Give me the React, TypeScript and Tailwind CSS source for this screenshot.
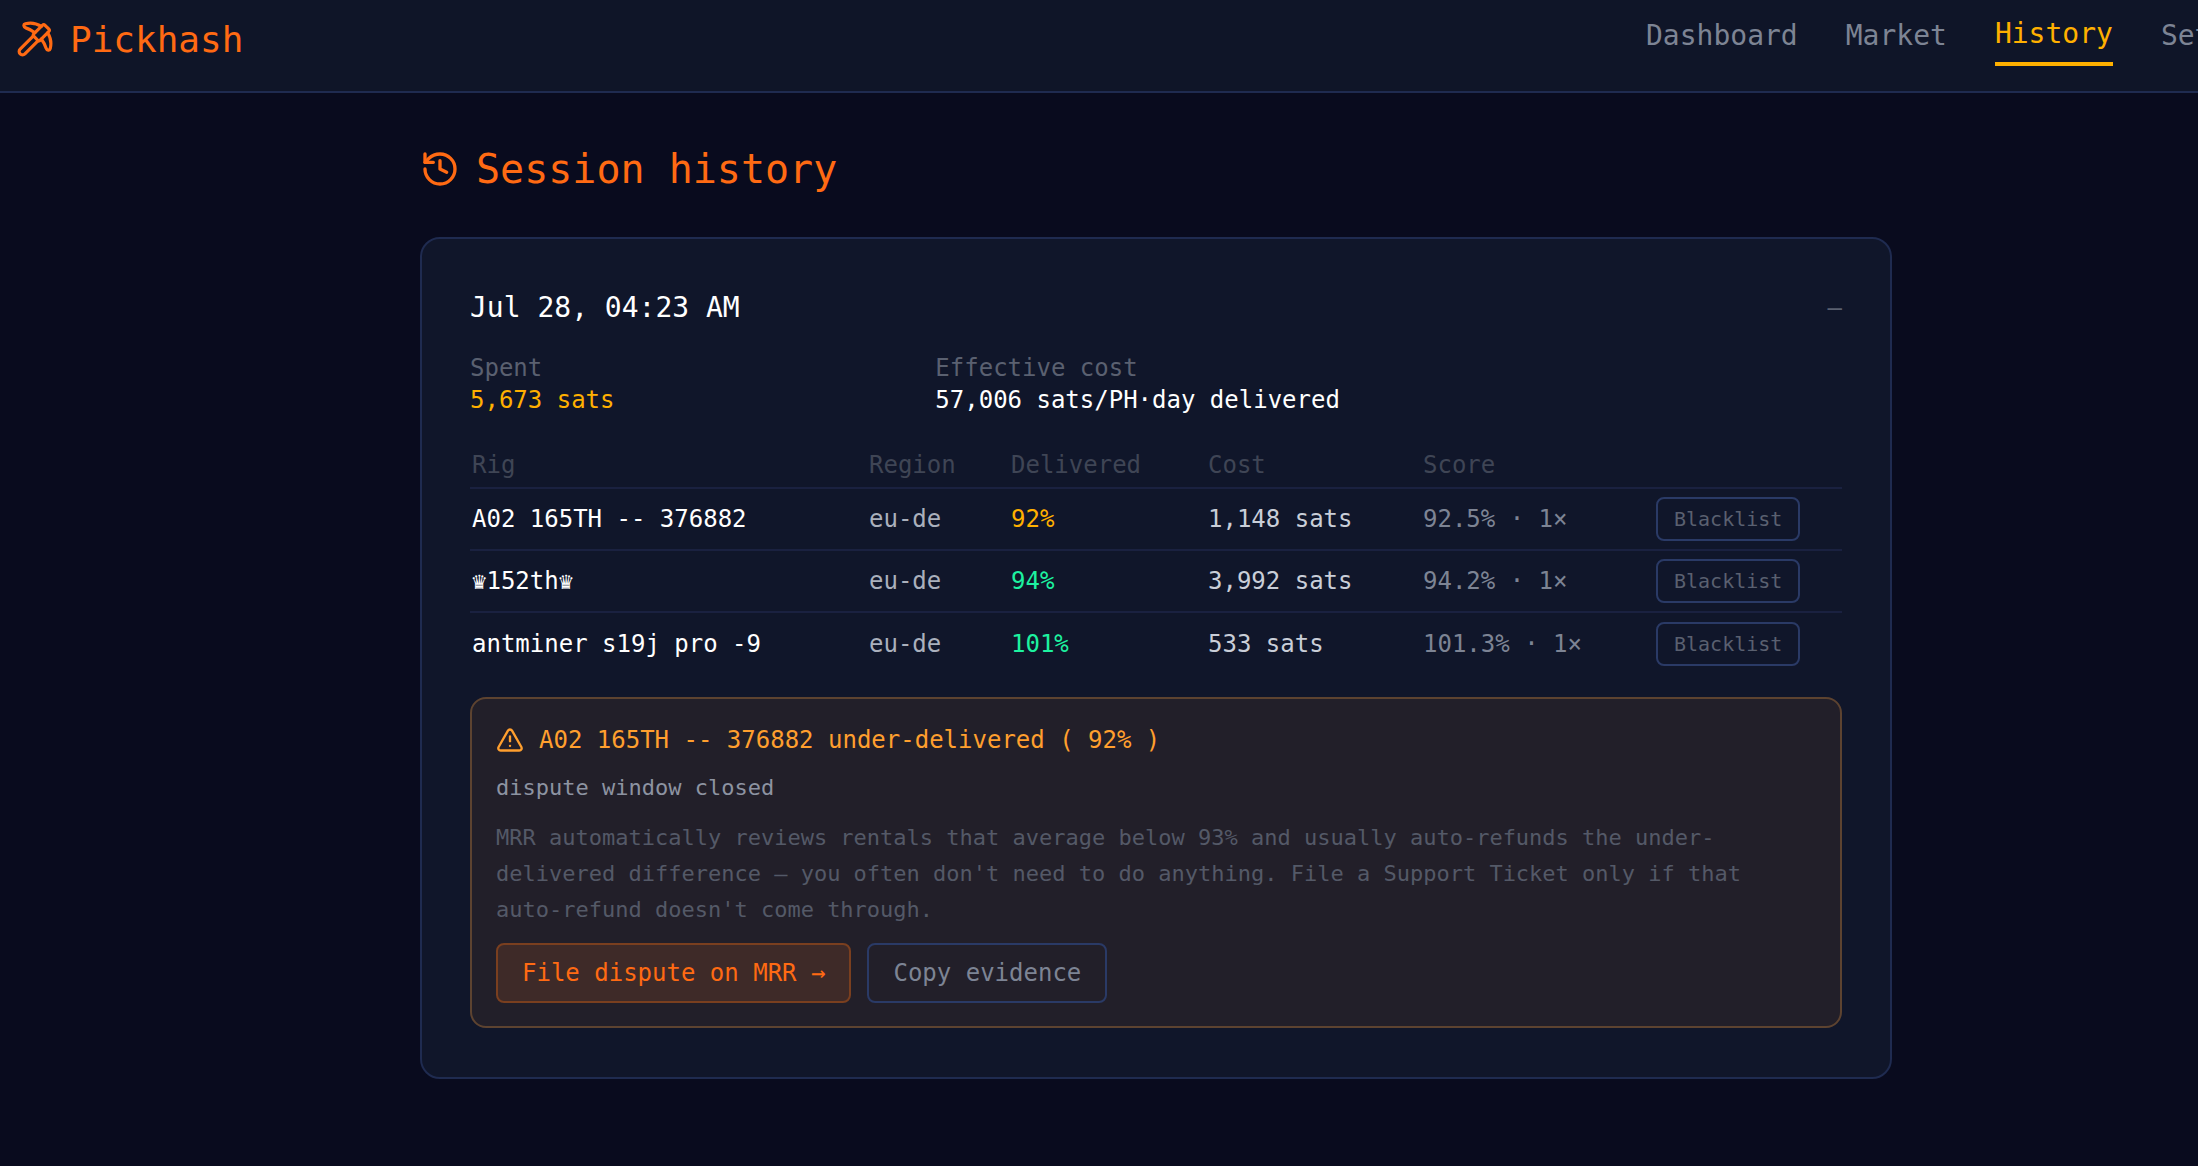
import { History, Pickaxe, TriangleAlert } from "lucide-react";

const rigs = [
  { name: "A02 165TH -- 376882", delivered: "92%", deliveredClass: "text-[#ffb000]", cost: "1,148 sats", score: "92.5% · 1×" },
  { name: "♛152th♛", delivered: "94%", deliveredClass: "text-[#1df2a0]", cost: "3,992 sats", score: "94.2% · 1×" },
  { name: "antminer s19j pro -9", delivered: "101%", deliveredClass: "text-[#1df2a0]", cost: "533 sats", score: "101.3% · 1×" },
];

function Navbar() {
  return (
    <header className="flex h-[93px] items-start justify-between overflow-hidden border-b-2 border-[#1f2b50] bg-[#0f1528] pl-4">
      <div className="flex h-[80px] items-center gap-4 text-[36px] text-[#ff6a13]">
        <Pickaxe size={38} className="mb-[3px]" />
        <span>Pickhash</span>
      </div>
      <nav className="flex h-[80px] w-[552px] shrink-0 items-center gap-12 text-[28px] leading-[40px] text-[#7d8494]">
        <a className="whitespace-nowrap pb-2">Dashboard</a>
        <a className="whitespace-nowrap pb-2">Market</a>
        <a className="whitespace-nowrap border-b-4 border-[#ffb000] pb-2 text-[#ffb000]">History</a>
        <a className="whitespace-nowrap pb-2">Settings</a>
      </nav>
    </header>
  );
}

function App() {
  return (
    <div className="min-h-[1166px] w-[2198px] overflow-hidden bg-[#090b1e] font-['DejaVu_Sans_Mono',monospace] text-white">
      <Navbar />
      <main className="ml-[420px] w-[1472px] pt-[52px]">
        <h1 className="flex h-[48px] items-center gap-4 text-[40px] font-normal text-[#ff6a13]">
          <History size={40} />
          <span>Session history</span>
        </h1>
        <section className="mt-[44px] h-[842px] rounded-[20px] border-2 border-[#1f2b50] bg-[#10162a] p-12">
          <div className="flex items-center justify-between">
            <span className="text-[28px] leading-[42px]">Jul 28, 04:23 AM</span>
            <span className="text-[24px] text-[#5a6070]">—</span>
          </div>
          <div className="mt-[23px] grid grid-cols-3 gap-6 text-[24px] leading-[32px]">
            <div>
              <div className="text-[#5a6070]">Spent</div>
              <div className="text-[#ffb000]">5,673 sats</div>
            </div>
            <div className="col-span-2">
              <div className="text-[#5a6070]">Effective cost</div>
              <div>57,006 sats/PH·day delivered</div>
            </div>
          </div>
          <table className="mt-[26px] w-full table-fixed border-collapse text-left text-[24px]">
            <colgroup>
              <col className="w-[397px]" />
              <col className="w-[142px]" />
              <col className="w-[197px]" />
              <col className="w-[215px]" />
              <col className="w-[233px]" />
              <col />
            </colgroup>
            <thead>
              <tr className="border-b-2 border-[#1a2140] text-[#3f4555]">
                <th className="h-[46px] px-[2px] font-normal">Rig</th>
                <th className="px-[2px] font-normal">Region</th>
                <th className="px-[2px] font-normal">Delivered</th>
                <th className="px-[2px] font-normal">Cost</th>
                <th className="px-[2px] font-normal">Score</th>
                <th />
              </tr>
            </thead>
            <tbody>
              {rigs.map((rig, i) => (
                <tr key={rig.name} className={i < rigs.length - 1 ? "border-b-2 border-[#1a2140]" : ""}>
                  <td className="h-[62px] px-[2px] whitespace-nowrap">{rig.name}</td>
                  <td className="px-[2px] text-[#aab0bc]">eu-de</td>
                  <td className={`px-[2px] ${rig.deliveredClass}`}>{rig.delivered}</td>
                  <td className="px-[2px] whitespace-nowrap text-[#c9ced8]">{rig.cost}</td>
                  <td className="px-[2px] whitespace-nowrap text-[#7d8494]">{rig.score}</td>
                  <td className="px-[2px]">
                    <button className="rounded-lg border-2 border-[#2a3a66] px-4 py-[5px] text-[20px] leading-[30px] text-[#5a6070]">
                      Blacklist
                    </button>
                  </td>
                </tr>
              ))}
            </tbody>
          </table>
          <div className="mt-[23px] h-[331px] rounded-2xl border-2 border-[#5d4330] bg-[#221f29] px-6 pt-[19px]">
            <div className="flex h-[44px] items-center gap-[15px] text-[24px] text-[#ff9f2e]">
              <TriangleAlert size={28} />
              <span>A02 165TH -- 376882 under-delivered ( 92% )</span>
            </div>
            <p className="mt-[8px] text-[22px] leading-[36px] text-[#8d93a1]">dispute window closed</p>
            <p className="mt-[14px] text-[22px] leading-[36px] text-[#545967]">
              MRR automatically reviews rentals that average below 93% and usually auto-refunds the under-delivered difference — you often don't need to do anything. File a Support Ticket only if that auto-refund doesn't come through.
            </p>
            <div className="mt-[15px] flex gap-4 text-[24px] leading-[36px]">
              <button className="rounded-lg border-2 border-[#7a3f1f] bg-[#3e2a28] px-6 py-[10px] text-[#ff6a13]">
                File dispute on MRR →
              </button>
              <button className="rounded-lg border-2 border-[#2a3a66] px-6 py-[10px] text-[#7d8494]">
                Copy evidence
              </button>
            </div>
          </div>
        </section>
      </main>
    </div>
  );
}

export default App;
